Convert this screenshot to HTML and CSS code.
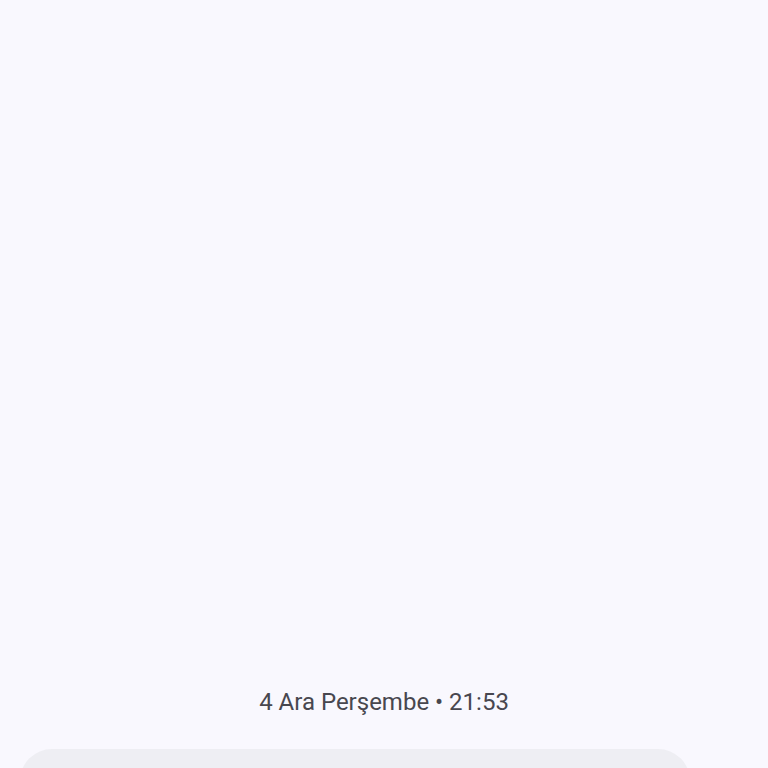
FILE: index.html
```html
<!DOCTYPE html>
<html lang="tr">
<head>
    <meta charset="UTF-8">
    <meta name="viewport" content="width=device-width, initial-scale=1.0">
    <title>Mesajlar</title>
<link rel="stylesheet" href="styles.css">
</head>
<body>
    <div class="chat">
        <div class="messages">
            <div class="timestamp">4 Ara Perşembe • 21:53</div>
        </div>
        <div class="composer">
            <div class="input-box"></div>
        </div>
    </div>
</body>
</html>
```

FILE: styles.css
```css
html, body {
    margin: 0;
    padding: 0;
}

body {
    font-family: Roboto, 'Noto Sans', sans-serif;
    background: #f9f8fe;
    width: 768px;
    height: 768px;
    overflow: hidden;
}

.chat {
    display: flex;
    flex-direction: column;
    height: 768px;
}

.messages {
    flex: 1;
    display: flex;
    flex-direction: column;
    justify-content: flex-end;
    padding-bottom: 33px;
}

.timestamp {
    text-align: center;
    color: #48474f;
    font-size: 24px;
    line-height: 28px;
}

.composer {
    padding: 0 78px 0 20px;
    height: 19px;
    overflow: hidden;
}

.input-box {
    height: 64px;
    background: #eeeef3;
    border-radius: 32px;
}
```
